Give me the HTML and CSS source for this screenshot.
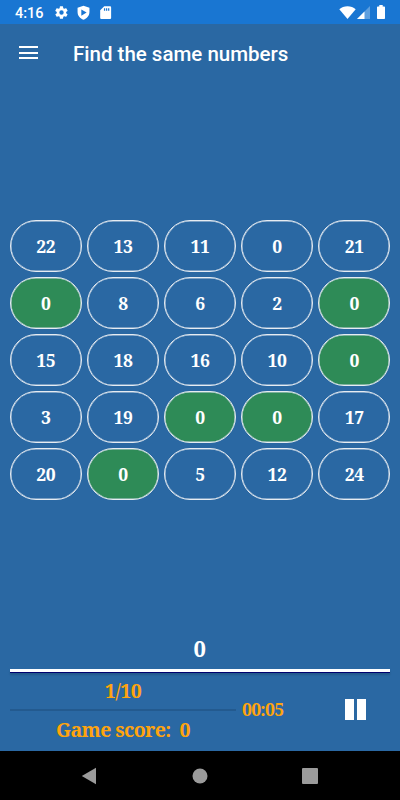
FILE: index.html
```
<!DOCTYPE html>
<html lang="en">
<head>
    <meta charset="utf-8">
    <title>Find the same numbers</title>
    <link rel="stylesheet" href="styles.css">
</head>
<body>
<div class="status-bar">
    <span class="clock">4:16</span>
    <svg class="status-icon gear" viewBox="0 0 24 24"><path d="M19.4 13a7.500 7.500 0 0 0 0-2l2.100-1.600a.5.5 0 0 0 .1-.7l-2-3.400a.5.5 0 0 0-.6-.2l-2.500 1a7 7 0 0 0-1.700-1l-.4-2.700a.5.5 0 0 0-.5-.4h-4a.5.5 0 0 0-.5.4L9 5.100a7 7 0 0 0-1.700 1l-2.500-1a.5.5 0 0 0-.6.2l-2 3.400a.5.5 0 0 0 .1.7L4.500 11a7.500 7.500 0 0 0 0 2l-2.200 1.600a.5.5 0 0 0-.1.7l2 3.400c.1.2.4.3.6.2l2.500-1a7 7 0 0 0 1.700 1l.4 2.700c0 .2.200.4.500.4h4c.3 0 .5-.2.500-.4l.4-2.700a7 7 0 0 0 1.700-1l2.500 1c.2.1.5 0 .6-.2l2-3.400a.5.5 0 0 0-.1-.7zM12 15.500a3.500 3.500 0 1 1 0-7 3.500 3.500 0 0 1 0 7z"/></svg>
    <svg class="status-icon shield" viewBox="0 0 24 24"><path fill-rule="evenodd" d="M12 1 2.500 4.500V11c0 6 4 10.500 9.500 12.500C17.500 21.500 21.500 17 21.500 11V4.500zM8.500 7v10l8.500-5z"/></svg>
    <svg class="status-icon card" viewBox="0 0 24 24"><path fill-rule="evenodd" d="M19 2h-9L3.500 8.500v12c0 1.100.9 2 2 2H19c1.100 0 2-.9 2-2V4c0-1.100-.9-2-2-2zM9.500 5h2v4h-2zM12.800 5h2v4h-2zM16.100 5h2v4h-2z"/></svg>
    <div class="signals">
        <svg class="wifi" viewBox="0 0 17 13"><path d="M8.500 13 .3 3.300C2.500 1.200 5.300.2 8.500.2s6 1 8.200 3.100z"/></svg>
        <svg class="cell" viewBox="0 0 13 13"><path class="faded" d="M13 0v13H0z"/><path d="M7.500 5.500V13H0z"/></svg>
        <svg class="battery" viewBox="0 0 8 14"><path d="M2.300 0h3.400v1.500H7c.6 0 1 .4 1 1V13c0 .6-.4 1-1 1H1c-.6 0-1-.4-1-1V2.500c0-.6.4-1 1-1h1.300z"/></svg>
    </div>
</div>

<div class="toolbar">
    <div class="menu"><span></span><span></span><span></span></div>
    <h1>Find the same numbers</h1>
</div>

<div class="board">
    <button>22</button>
    <button>13</button>
    <button>11</button>
    <button>0</button>
    <button>21</button>

    <button class="found">0</button>
    <button>8</button>
    <button>6</button>
    <button>2</button>
    <button class="found">0</button>

    <button>15</button>
    <button>18</button>
    <button>16</button>
    <button>10</button>
    <button class="found">0</button>

    <button>3</button>
    <button>19</button>
    <button class="found">0</button>
    <button class="found">0</button>
    <button>17</button>

    <button>20</button>
    <button class="found">0</button>
    <button>5</button>
    <button>12</button>
    <button>24</button>
</div>

<div class="target">0</div>
<div class="divider"></div>

<div class="footer">
    <div class="scores">
        <div class="round">1/10</div>
        <div class="progress"></div>
        <div class="score">Game score:&nbsp; 0</div>
    </div>
    <div class="timer">00:05</div>
    <div class="pause"><span></span><span></span></div>
</div>

<div class="nav-bar">
    <svg viewBox="0 0 16 18"><path d="M15 .8v16.400L.8 9z"/></svg>
    <svg viewBox="0 0 16 18"><circle cx="8" cy="9" r="7.500"/></svg>
    <svg viewBox="0 0 16 18"><rect x="0" y="1" width="16" height="16" rx="1"/></svg>
</div>
</body>
</html>
```
FILE: styles.css
```
* {
    box-sizing: border-box;
}
body {
    margin: 0;
    height: 800px;
    display: flex;
    flex-direction: column;
    overflow: hidden;
    background-color: #2a68a3;
    color: #fff;
    font-family: "Noto Serif", "Droid Serif", "DejaVu Serif Condensed", "DejaVu Serif", serif;
    font-weight: bold;
}
svg {
    display: block;
    fill: #fff;
}
.status-bar {
    height: 24px;
    display: flex;
    align-items: center;
    padding: 2px 15px 0 15px;
    background-color: #1976d2;
    font-family: Roboto, sans-serif;
}
.clock {
    width: 39px;
    font-size: 14.5px;
    font-weight: 500;
}
.status-icon {
    width: 15px;
    height: 15px;
    margin-top: -2px;
}
.shield {
    margin-left: 7px;
}
.card {
    margin-left: 7px;
}
.signals {
    display: flex;
    align-items: center;
    margin: -2px 0 0 auto;
}
.wifi {
    width: 17px;
    height: 13px;
}
.cell {
    width: 13px;
    height: 13px;
    margin-left: 1px;
}
.cell .faded {
    opacity: 0.3;
}
.battery {
    width: 8px;
    height: 14px;
    margin-left: 7px;
}
.toolbar {
    height: 56px;
    display: flex;
    align-items: center;
    padding: 4px 19px 0;
}
.menu {
    width: 19px;
    height: 13px;
    display: flex;
    flex-direction: column;
    justify-content: space-between;
    margin-top: -3px;
}
.menu span {
    height: 2px;
    background-color: #fff;
}
h1 {
    margin: 0 0 0 35px;
    font-family: Roboto, sans-serif;
    font-size: 20.5px;
    font-weight: 500;
}
.board {
    display: grid;
    grid-template-columns: repeat(5, 1fr);
    grid-auto-rows: 52px;
    gap: 5px 5.500px;
    margin: 140px 10px 0;
}
.board button {
    padding: 0 0 1px;
    border: 1px solid #e6ecf2;
    border-radius: 26px;
    box-shadow: inset 0 0 0 0.5px #c9d6e4;
    background: none;
    color: #fff;
    font: inherit;
    font-size: 17.5px;
    letter-spacing: -0.4px;
}
.board .found {
    background-color: #2e8b57;
}
.target {
    margin: 129px 11px 0 10px;
    font-size: 22px;
    line-height: 38px;
    letter-spacing: -0.5px;
    text-align: center;
}
.divider {
    height: 4px;
    margin: 2px 10px 0;
    background-color: #fff;
    border-bottom: 1px solid #00006e;
    box-shadow: 0 2px 2px rgba(0, 0, 0, 0.15);
}
.footer {
    height: 78px;
    display: flex;
    align-items: center;
    padding: 0 34px 4px 10px;
    color: #ffa40d;
}
.scores {
    width: 226px;
    font-size: 19.5px;
    line-height: 38px;
    letter-spacing: -0.6px;
    text-align: center;
}
.round {
    padding-top: 1px;
    line-height: 37px;
}
.progress {
    height: 2px;
    background-color: #235a8f;
}
.timer {
    margin: -2px 0 0 6px;
    font-size: 17.5px;
    letter-spacing: -0.7px;
}
.pause {
    display: flex;
    gap: 3px;
    margin: -2px 0 0 auto;
}
.pause span {
    width: 9px;
    height: 21px;
    background-color: #fff;
}
.nav-bar {
    flex: 1;
    display: flex;
    justify-content: space-between;
    align-items: center;
    padding: 0 82px 0 81px;
    background-color: #000;
}
.nav-bar svg {
    width: 16px;
    height: 18px;
    fill: #9b9b9b;
}
```
